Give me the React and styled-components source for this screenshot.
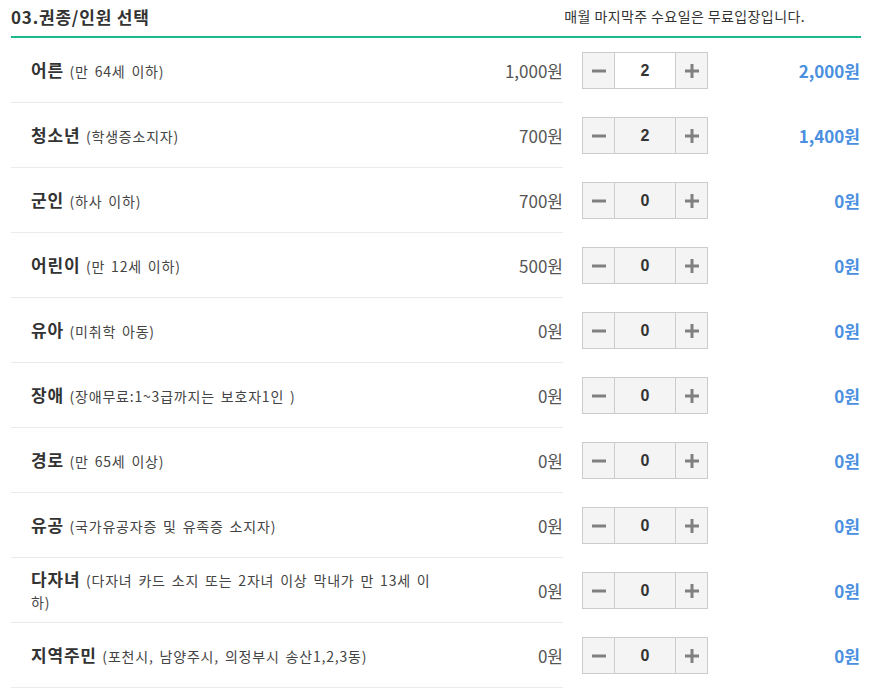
import React, { useState } from 'react';
import styled, { createGlobalStyle } from 'styled-components';

const GlobalStyle = createGlobalStyle`
  body {
    margin: 0;
    background: #fff;
    font-family: "Noto Sans CJK KR", "Noto Sans", sans-serif;
    color: #333;
  }
`;

const Section = styled.div`
  width: 850px;
  margin-left: 11px;
`;

const Header = styled.div`
  display: flex;
  align-items: center;
  justify-content: space-between;
  height: 36px;
  border-bottom: 2px solid #1bb98b;
`;

const Title = styled.h2`
  margin: 0 0 4px;
  font-size: 17px;
  font-weight: 700;
  color: #333;
  letter-spacing: 0.8px;
`;

const Notice = styled.p`
  margin: 0 56px 4px 0;
  font-size: 14px;
  letter-spacing: 0.4px;
  color: #333;
`;

const Row = styled.div`
  display: flex;
  align-items: center;
`;

const Info = styled.div`
  display: flex;
  align-items: center;
  width: 532px;
  min-height: 64px;
  padding-left: 20px;
  border-bottom: 1px solid #ebebeb;
`;

const Label = styled.div`
  flex: 0 0 415px;
  line-height: 21px;
  word-spacing: 2px;
`;

const Name = styled.strong`
  display: inline-block;
  font-size: 17px;
  line-height: 21px;
  font-weight: 700;
  letter-spacing: 0.8px;
  color: #333;
`;

const Desc = styled.span`
  font-size: 14px;
  letter-spacing: 0.8px;
  color: #444;
`;

const Price = styled.div`
  flex: 1;
  text-align: right;
  font-size: 17px;
  color: #555;
`;

const Counter = styled.div`
  display: flex;
  margin-left: 19px;
  height: 37px;
  border: 1px solid #cccccc;
  box-sizing: border-box;
`;

const StepButton = styled.button`
  width: 31px;
  padding: 0;
  border: none;
  background: #f4f4f4;
  display: flex;
  align-items: center;
  justify-content: center;
  cursor: pointer;
`;

const Count = styled.div`
  width: 60px;
  border-left: 1px solid #cccccc;
  border-right: 1px solid #cccccc;
  background: ${(p) => (p.$active ? '#fff' : '#f4f4f4')};
  display: flex;
  align-items: center;
  justify-content: center;
  font-family: "Liberation Sans", Arial, sans-serif;
  font-size: 16px;
  font-weight: 700;
  color: #333;
`;

const Total = styled.div`
  flex: 1;
  text-align: right;
  padding-right: 1px;
  font-size: 17px;
  font-weight: 700;
  color: #4a8fe0;
`;

const Minus = () => (
  <svg width="14" height="14" viewBox="0 0 14 14">
    <rect x="0" y="5.5" width="14" height="3" fill="#808080" />
  </svg>
);

const Plus = () => (
  <svg width="14" height="14" viewBox="0 0 14 14">
    <rect x="0" y="5.5" width="14" height="3" fill="#808080" />
    <rect x="5.5" y="0" width="3" height="14" fill="#808080" />
  </svg>
);

const tickets = [
  { name: '어른', desc: '(만 64세 이하)', price: 1000, qty: 2 },
  { name: '청소년', desc: '(학생증소지자)', price: 700, qty: 2 },
  { name: '군인', desc: '(하사 이하)', price: 700, qty: 0 },
  { name: '어린이', desc: '(만 12세 이하)', price: 500, qty: 0 },
  { name: '유아', desc: '(미취학 아동)', price: 0, qty: 0 },
  { name: '장애', desc: '(장애무료:1~3급까지는 보호자1인 )', price: 0, qty: 0 },
  { name: '경로', desc: '(만 65세 이상)', price: 0, qty: 0 },
  { name: '유공', desc: '(국가유공자증 및 유족증 소지자)', price: 0, qty: 0 },
  { name: '다자녀', desc: '(다자녀 카드 소지 또는 2자녀 이상 막내가 만 13세 이하)', price: 0, qty: 0 },
  { name: '지역주민', desc: '(포천시, 남양주시, 의정부시 송산1,2,3동)', price: 0, qty: 0 },
];

const won = (n) => `${n.toLocaleString('ko-KR')}원`;

const App = () => {
  const [counts, setCounts] = useState(tickets.map((t) => t.qty));

  const change = (i, d) =>
    setCounts((prev) => prev.map((c, j) => (j === i ? Math.max(0, c + d) : c)));

  return (
    <>
      <GlobalStyle />
      <Section>
        <Header>
          <Title>03.권종/인원 선택</Title>
          <Notice>매월 마지막주 수요일은 무료입장입니다.</Notice>
        </Header>
        {tickets.map((t, i) => (
          <Row key={t.name}>
            <Info>
              <Label>
                <Name>{t.name}</Name> <Desc>{t.desc}</Desc>
              </Label>
              <Price>{won(t.price)}</Price>
            </Info>
            <Counter>
              <StepButton onClick={() => change(i, -1)} aria-label="감소">
                <Minus />
              </StepButton>
              <Count $active={i === 0}>{counts[i]}</Count>
              <StepButton onClick={() => change(i, 1)} aria-label="증가">
                <Plus />
              </StepButton>
            </Counter>
            <Total>{won(t.price * counts[i])}</Total>
          </Row>
        ))}
      </Section>
    </>
  );
};

export default App;
